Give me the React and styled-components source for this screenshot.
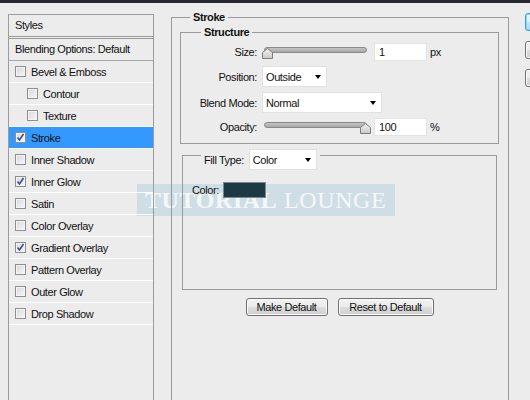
import React from 'react';
import styled, { createGlobalStyle } from 'styled-components';

const GlobalStyle = createGlobalStyle`
  html, body {
    margin: 0;
    padding: 0;
    overflow: hidden;
  }
  body {
    width: 530px;
    height: 400px;
    background: #ececec;
    font-family: "Liberation Sans", Arial, sans-serif;
    font-size: 11px;
    letter-spacing: -0.4px;
    color: #111;
  }
`;

const effects = [
  { name: 'Bevel & Emboss', checked: false },
  { name: 'Contour', checked: false, sub: true },
  { name: 'Texture', checked: false, sub: true },
  { name: 'Stroke', checked: true, selected: true },
  { name: 'Inner Shadow', checked: false },
  { name: 'Inner Glow', checked: true },
  { name: 'Satin', checked: false },
  { name: 'Color Overlay', checked: false },
  { name: 'Gradient Overlay', checked: true },
  { name: 'Pattern Overlay', checked: false },
  { name: 'Outer Glow', checked: false },
  { name: 'Drop Shadow', checked: false },
];

const Check = ({ checked }) => (
	<CheckBox>
		{checked && (
			<svg width="9" height="9" viewBox="0 0 9 9">
				<path d="M1.5 4.5 L3.5 7 L7.5 1" fill="none" stroke="#3f4a9e" strokeWidth="1.6" />
			</svg>
		)}
	</CheckBox>
);

const SliderThumb = ({ value }) => (
	<Thumb width="11" height="11" viewBox="0 0 11 11" style={{ left: `${(value / 100) * 98}px` }}>
		<defs>
			<linearGradient id={`thumb${value}`} x1="0" y1="0" x2="0" y2="1">
				<stop offset="0" stopColor="#f4f4f4" />
				<stop offset="1" stopColor="#c9c9c9" />
			</linearGradient>
		</defs>
		<polygon points="0.5,10.5 0.5,4.5 5.5,0.5 10.5,4.5 10.5,10.5" fill={`url(#thumb${value})`} stroke="#7d7d7d" />
	</Thumb>
);

const App = () => {
	return (
		<Window>
			<GlobalStyle />
			<Watermark>
				<b>TUTORIAL</b> LOUNGE
			</Watermark>
			<TopStrip />
			<Body>
				<StylesPanel>
					<PanelHeader>Styles</PanelHeader>
					<BlendRow>Blending Options: Default</BlendRow>
					{effects.map((fx) => (
						<EffectRow key={fx.name} sub={fx.sub} selected={fx.selected}>
							<Check checked={fx.checked} />
							<span>{fx.name}</span>
						</EffectRow>
					))}
				</StylesPanel>

				<Group>
					<GroupTitle>Stroke</GroupTitle>
					<Structure>
						<SubTitle>Structure</SubTitle>
						<Rows>
							<Label>Size:</Label>
							<Controls>
								<Slider>
									<Track />
									<SliderThumb value={0} />
								</Slider>
								<NumberBox>1</NumberBox>
								<Unit>px</Unit>
							</Controls>

							<Label>Position:</Label>
							<Controls>
								<Select width={65}>
									Outside
									<Arrow />
								</Select>
							</Controls>

							<Label>Blend Mode:</Label>
							<Controls>
								<Select width={120}>
									Normal
									<Arrow />
								</Select>
							</Controls>

							<Label>Opacity:</Label>
							<Controls>
								<Slider>
									<Track />
									<SliderThumb value={100} />
								</Slider>
								<NumberBox>100</NumberBox>
								<Unit>%</Unit>
							</Controls>
						</Rows>
					</Structure>

					<FillGroup>
						<FillLegend>
							<LegendRow>
								<span>Fill Type:</span>
								<Select width={68}>
									Color
									<Arrow />
								</Select>
							</LegendRow>
						</FillLegend>
						<ColorRow>
							<span>Color:</span>
							<Swatch color="#1c3944" />
						</ColorRow>
					</FillGroup>

					<ButtonRow>
						<Button width={82}>Make Default</Button>
						<Button width={96}>Reset to Default</Button>
					</ButtonRow>
				</Group>

				<SideButtons>
					<SideButton primary />
					<SideButton />
					<SideButton />
				</SideButtons>
			</Body>
		</Window>
	);
};

const Window = styled.div`
	position: relative;
	width: 530px;
	height: 400px;
	overflow: hidden;
`;

const TopStrip = styled.div`
	position: relative;
	height: 3px;
	background: #27272f;
`;

const Body = styled.div`
	position: relative;
	display: flex;
	align-items: flex-start;
	padding-left: 8px;

	& > * {
		flex-shrink: 0;
	}
`;

const StylesPanel = styled.div`
	box-sizing: border-box;
	width: 146px;
	height: 420px;
	margin-top: 11px;
	border: 1px solid #9c9c9c;
	white-space: nowrap;
`;

const PanelHeader = styled.div`
	height: 21px;
	line-height: 21px;
	padding-left: 6px;
	border-bottom: 3px double #9a9a9a;
`;

const BlendRow = styled.div`
	height: 21px;
	line-height: 21px;
	padding-left: 6px;
	border-bottom: 1px solid #a8a8a8;
`;

const EffectRow = styled.div`
	display: flex;
	align-items: center;
	gap: 5px;
	height: 21px;
	padding-left: ${({ sub }) => (sub ? '18px' : '6px')};
	border-bottom: 1px solid #ffffff;
	background: ${({ selected }) => (selected ? '#3399ff' : 'transparent')};
`;

const CheckBox = styled.div`
	box-sizing: border-box;
	width: 11px;
	height: 11px;
	display: flex;
	align-items: center;
	justify-content: center;
	border: 1px solid #8e8f8f;
	background: linear-gradient(135deg, #d8d8d8, #f7f7f7);
	box-shadow: inset 0 0 0 1px #f4f4f4;
`;

const Group = styled.fieldset`
	box-sizing: border-box;
	width: 338px;
	height: 420px;
	margin: 7px 0 0 17px;
	padding: 1px 9px 0 8px;
	min-width: 0;
	border: 1px solid #9a9a9a;
	white-space: nowrap;
`;

const GroupTitle = styled.legend`
	margin-left: 10px;
	padding: 0 3px;
	line-height: 14px;
	font-weight: bold;
`;

const Structure = styled.fieldset`
	box-sizing: border-box;
	margin: 0;
	padding: 4px 0 7px 0;
	min-width: 0;
	border: 1px solid #9a9a9a;
`;

const SubTitle = styled.legend`
	margin-left: 20px;
	padding: 0 3px;
	line-height: 14px;
	font-weight: bold;
`;

const Rows = styled.div`
	display: grid;
	grid-template-columns: 76px auto;
	grid-template-rows: 18px 21px 21px 18px;
	column-gap: 5px;
	row-gap: 5px;
`;

const Label = styled.div`
	align-self: center;
	text-align: right;
`;

const Controls = styled.div`
	display: flex;
	align-items: center;
`;

const Slider = styled.div`
	position: relative;
	width: 108px;
	height: 14px;
`;

const Track = styled.div`
	box-sizing: border-box;
	height: 6px;
	margin: 2px 3px 0 2px;
	border: 1px solid #8a8a8a;
	border-radius: 3px;
	background: linear-gradient(#c4c4c4, #a8a8a8);
`;

const Thumb = styled.svg`
	position: absolute;
	top: 3px;
`;

const NumberBox = styled.div`
	box-sizing: border-box;
	width: 53px;
	height: 18px;
	line-height: 16px;
	margin-left: 4px;
	padding-left: 4px;
	background: #fff;
	border: 1px solid #e3e3e3;
`;

const Unit = styled.span`
	margin-left: 3px;
`;

const Select = styled.div`
	box-sizing: border-box;
	display: flex;
	align-items: center;
	justify-content: space-between;
	width: ${({ width }) => width}px;
	height: 21px;
	padding: 0 5px 0 3px;
	background: #fff;
	border: 1px solid #e0e0e0;
`;

const Arrow = styled.span`
	width: 0;
	height: 0;
	border-left: 3.5px solid transparent;
	border-right: 3.5px solid transparent;
	border-top: 4px solid #000;
`;

const FillGroup = styled.fieldset`
	box-sizing: border-box;
	height: 149px;
	margin: -3px 2px 0;
	padding: 12px 0 0 9px;
	min-width: 0;
	border: 1px solid #9a9a9a;
`;

const FillLegend = styled.legend`
	margin-left: 9px;
	padding: 8px 3px 0;
`;

const LegendRow = styled.div`
	display: flex;
	align-items: center;
	gap: 5px;
`;

const ColorRow = styled.div`
	display: flex;
	align-items: center;
	gap: 4px;
`;

const Swatch = styled.div`
	box-sizing: border-box;
	width: 43px;
	height: 16px;
	background: ${({ color }) => color};
	border: 1px solid #7c8a8f;
`;

const ButtonRow = styled.div`
	display: flex;
	justify-content: center;
	gap: 10px;
	margin-top: 8px;
`;

const Button = styled.div`
	box-sizing: border-box;
	width: ${({ width }) => width}px;
	height: 18px;
	line-height: 16px;
	text-align: center;
	border: 1px solid #707070;
	border-radius: 3px;
	background: linear-gradient(#f2f2f2 0%, #ebebeb 50%, #dddddd 51%, #cfcfcf 100%);
	box-shadow: inset 0 0 0 1px #fbfbfb;
`;

const SideButtons = styled.div`
	display: flex;
	flex-direction: column;
	gap: 10px;
	margin: 10px 0 0 16px;
`;

const SideButton = styled.div`
	box-sizing: border-box;
	width: 80px;
	height: 18px;
	border-radius: 3px;
	border: 1px solid ${({ primary }) => (primary ? '#3c9ed8' : '#707070')};
	background: ${({ primary }) =>
		primary
			? 'linear-gradient(#eaf6fd 0%, #d9f0fc 50%, #bee6fd 51%, #a7d9f5 100%)'
			: 'linear-gradient(#f2f2f2 0%, #ebebeb 50%, #dddddd 51%, #cfcfcf 100%)'};
	box-shadow: inset 0 0 0 1px ${({ primary }) => (primary ? '#8fd3f5' : '#fbfbfb')};
`;

const Watermark = styled.div`
	position: absolute;
	left: 137px;
	top: 184px;
	width: 258px;
	height: 32px;
	padding-left: 8px;
	box-sizing: border-box;
	line-height: 33px;
	background: rgba(178, 208, 222, 0.5);
	color: rgba(255, 255, 255, 0.8);
	font-family: "Liberation Serif", "Times New Roman", serif;
	font-size: 24px;
	letter-spacing: 0.6px;
	white-space: nowrap;

	b {
		font-weight: bold;
	}
`;

export default App;
